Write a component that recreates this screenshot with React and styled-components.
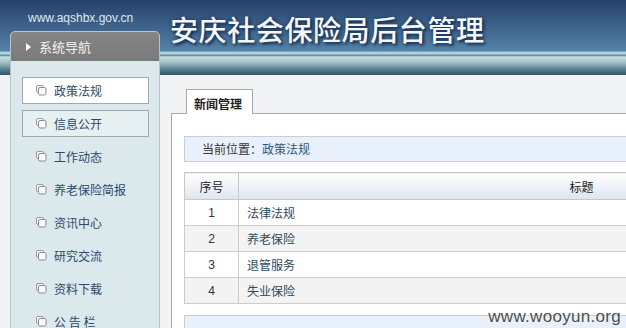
import React from "react";
import styled, { createGlobalStyle } from "styled-components";

const GlobalStyle = createGlobalStyle`
  html, body {
    margin: 0;
    padding: 0;
    background: #f2f3f5;
    overflow: hidden;
  }
  body {
    font-family: "Liberation Sans", "Noto Sans CJK SC", sans-serif;
    font-size: 12px;
  }
`;

const navItems = [
  { label: "政策法规", boxed: "white" },
  { label: "信息公开", boxed: "light" },
  { label: "工作动态" },
  { label: "养老保险简报" },
  { label: "资讯中心" },
  { label: "研究交流" },
  { label: "资料下载" },
  { label: "公 告 栏" },
];

const rows = ["法律法规", "养老保险", "退管服务", "失业保险"];

const PageIcon = () => (
  <svg width="11" height="11" viewBox="0 0 11 11">
    <rect x="0.5" y="0.5" width="7" height="7" rx="1.5" fill="#fff" stroke="#9a9a9a" />
    <rect x="2.5" y="2.5" width="7.5" height="7.5" rx="1.5" fill="#fafafa" stroke="#8c8c8c" />
  </svg>
);

const App = () => {
  return (
    <Page>
      <GlobalStyle />
      <Header>
        <SiteUrl>www.aqshbx.gov.cn</SiteUrl>
        <Title>安庆社会保险局后台管理</Title>
      </Header>

      <Main>
        <Sidebar>
          <SideHead>
            <Arrow />
            系统导航
          </SideHead>
          <NavList>
            {navItems.map((item) => (
              <NavItem key={item.label} $boxed={item.boxed}>
                <PageIcon />
                <span>{item.label}</span>
              </NavItem>
            ))}
          </NavList>
        </Sidebar>

        <Content>
          <Tab>新闻管理</Tab>
          <Panel>
            <Crumb>
              当前位置：<CrumbLink>政策法规</CrumbLink>
            </Crumb>
            <Table>
              <thead>
                <tr>
                  <Th $narrow>序号</Th>
                  <Th>标题</Th>
                </tr>
              </thead>
              <tbody>
                {rows.map((title, i) => (
                  <Row key={title} $odd={i % 2 === 1}>
                    <NumCell>{i + 1}</NumCell>
                    <TitleCell>{title}</TitleCell>
                  </Row>
                ))}
              </tbody>
            </Table>
            <Footer />
          </Panel>
        </Content>
      </Main>

      <Watermark>www.wooyun.org</Watermark>
    </Page>
  );
};

const Page = styled.div`
  position: relative;
  width: 626px;
  height: 328px;
  overflow: hidden;
`;

const Header = styled.header`
  display: flex;
  align-items: flex-start;
  height: 75px;
  background: linear-gradient(
    to bottom,
    #24416a 0px,
    #3a5d86 22px,
    #5684a9 51px,
    #a6cfdb 52px,
    #b9dbe3 54px,
    #4f7b8b 55px,
    #c6dfe2 57px,
    #92b4bb 64px,
    #5a8290 69px,
    #2e5767 75px
  );
`;

const SiteUrl = styled.div`
  flex: none;
  width: 142px;
  padding: 11px 0 0 28px;
  color: #dfe8f0;
  font-family: "Liberation Sans", Arial, sans-serif;
  font-size: 12px;
`;

const Title = styled.h1`
  flex: none;
  margin: 0;
  padding-top: 12px;
  font-family: "Noto Sans CJK SC", sans-serif;
  font-size: 28px;
  font-weight: 500;
  line-height: 34px;
  letter-spacing: 0.6px;
  color: #f4f8fb;
  text-shadow: 2px 2px 3px #17304f, 0 0 4px #1d3a5e;
`;

const Main = styled.div`
  display: flex;
  align-items: flex-start;
`;

const Sidebar = styled.aside`
  position: relative;
  z-index: 1;
  flex: none;
  width: 148px;
  height: 320px;
  margin: -44px 0 0 10px;
  border: 1px solid #b7c3c8;
  border-radius: 5px 5px 0 0;
  background: #dbe8ec;
`;

const SideHead = styled.div`
  display: flex;
  align-items: center;
  gap: 8px;
  height: 29px;
  padding-left: 15px;
  border-radius: 4px 4px 0 0;
  background: linear-gradient(to bottom, #858585, #7a7a7a);
  color: #f3f3f3;
  font-family: "Noto Sans CJK SC", sans-serif;
  font-size: 13px;
`;

const Arrow = styled.span`
  width: 0;
  height: 0;
  border-top: 4px solid transparent;
  border-bottom: 4px solid transparent;
  border-left: 5px solid #ffffff;
`;

const NavList = styled.ul`
  list-style: none;
  margin: 0;
  padding: 16px 10px 0 11px;
  display: flex;
  flex-direction: column;
  gap: 6px;
`;

const NavItem = styled.li`
  display: flex;
  align-items: center;
  gap: 7px;
  height: 25px;
  padding-left: 13px;
  border: 1px solid ${({ $boxed }) => ($boxed ? "#a3a8aa" : "transparent")};
  background: ${({ $boxed }) =>
    $boxed === "white" ? "#ffffff" : $boxed === "light" ? "#e6eff1" : "transparent"};
  color: #2c4a6a;
  font-family: "Noto Sans CJK SC", sans-serif;
  font-size: 12px;
  white-space: nowrap;
`;

const Content = styled.section`
  flex: none;
  display: flex;
  flex-direction: column;
  margin: 14px 0 0 11px;
`;

const Tab = styled.div`
  position: relative;
  z-index: 1;
  width: 58px;
  height: 24px;
  margin: 0 0 -1px 15px;
  padding-left: 7px;
  border: 1px solid #aaaaaa;
  border-bottom: none;
  background: #ffffff;
  color: #1e1e1e;
  font-family: "Noto Sans CJK SC", sans-serif;
  font-size: 12px;
  font-weight: 700;
  line-height: 27px;
`;

const Panel = styled.div`
  width: 752px;
  height: 240px;
  padding: 22px 0 0 12px;
  border-top: 1px solid #aaaaaa;
  border-left: 1px solid #aaaaaa;
  background: #ffffff;
`;

const Crumb = styled.div`
  width: 722px;
  height: 24px;
  padding-left: 17px;
  border: 1px solid #c9ced3;
  background: #e8f1fb;
  color: #333333;
  font-family: "Noto Sans CJK SC", sans-serif;
  font-size: 12px;
  line-height: 24px;
`;

const CrumbLink = styled.span`
  color: #2b5a7a;
`;

const Table = styled.table`
  width: 741px;
  margin-top: 10px;
  border-collapse: collapse;
  font-family: "Noto Sans CJK SC", sans-serif;
  font-size: 12px;
`;

const Th = styled.th`
  width: ${({ $narrow }) => ($narrow ? "53px" : "auto")};
  height: 26px;
  padding: 0;
  border: 1px solid #c8c8c8;
  background: linear-gradient(to bottom, #ffffff, #dfe5ee);
  color: #222222;
  font-weight: 400;
  text-align: center;
`;

const Row = styled.tr`
  background: ${({ $odd }) => ($odd ? "#f3f3f3" : "#ffffff")};
`;

const NumCell = styled.td`
  height: 25px;
  padding: 0;
  border: 1px solid #cccccc;
  color: #333333;
  font-family: "Liberation Sans", Arial, sans-serif;
  text-align: center;
`;

const TitleCell = styled.td`
  padding: 0 0 0 8px;
  border: 1px solid #cccccc;
  color: #2e4a5c;
`;

const Footer = styled.div`
  width: 739px;
  height: 30px;
  margin-top: 11px;
  border: 1px solid #c9ced3;
  background: #e8f1fb;
`;

const Watermark = styled.div`
  position: absolute;
  right: 5px;
  bottom: 1px;
  z-index: 2;
  color: #4d4d4d;
  font-family: "Liberation Sans", Arial, sans-serif;
  font-size: 17px;
  letter-spacing: 0.3px;
  text-shadow: 0 0 2px #ffffff;
`;

export default App;
